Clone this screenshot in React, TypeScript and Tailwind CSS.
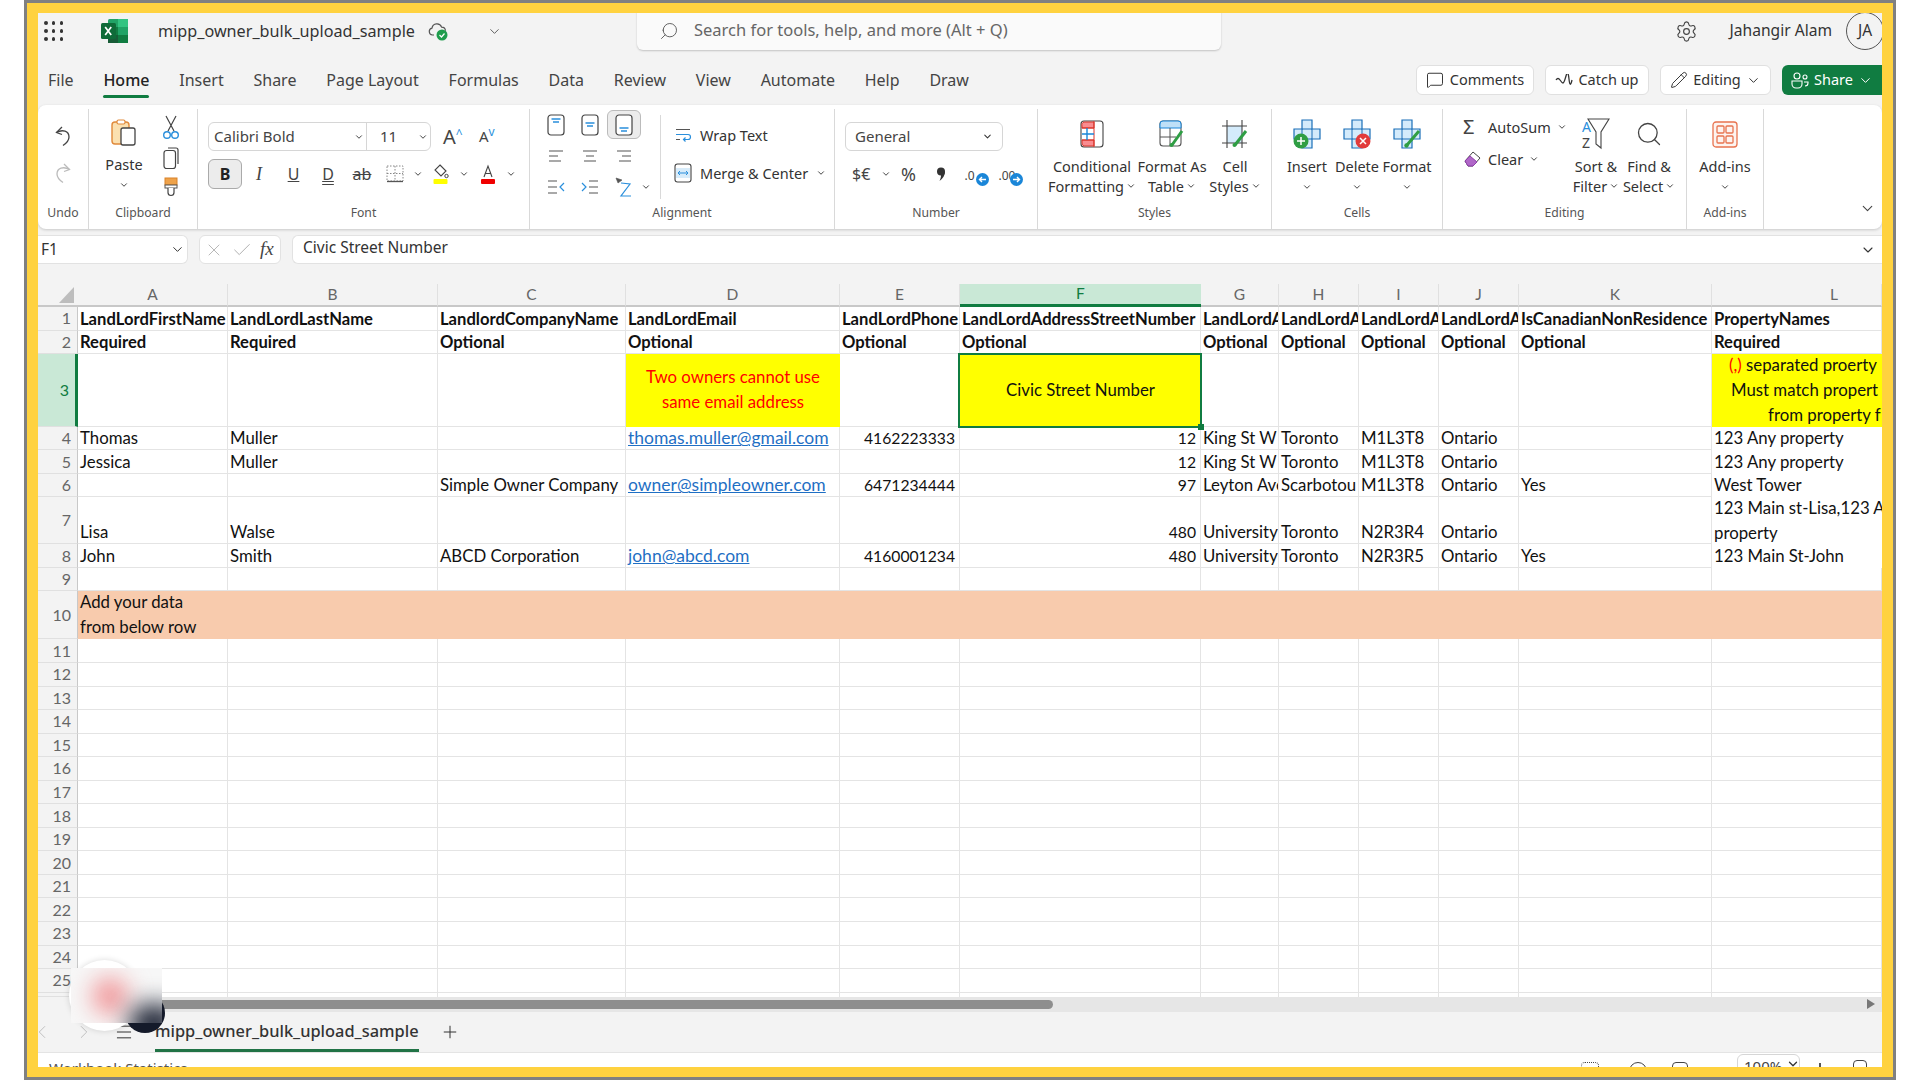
import React from 'react'
import { ChevronDown, ChevronLeft, ChevronRight, MessageSquare, Pencil, Plus, Search, Settings, X, Check, Menu } from 'lucide-react'

const Chev = ({ size = 11, className = '' }: { size?: number; className?: string }) => (
  <ChevronDown size={size} strokeWidth={2.2} className={`text-[#333] shrink-0 ${className}`} />
)

const ExcelLogo = () => (
  <svg width="27" height="24" viewBox="0 0 27 24">
    <rect x="7" y="0" width="20" height="24" rx="1.5" fill="#21a366" />
    <rect x="17" y="0" width="10" height="8" fill="#33c481" />
    <rect x="7" y="8" width="10" height="8" fill="#107c41" />
    <rect x="17" y="16" width="10" height="8" fill="#107c41" />
    <rect x="7" y="16" width="10" height="8" fill="#185c37" />
    <rect x="0" y="4" width="15" height="16" rx="1.5" fill="#0f6b38" />
    <path d="M4.2 8l6 8M10.2 8l-6 8" stroke="#fff" strokeWidth="1.7" />
  </svg>
)

const CloudCheck = () => (
  <svg width="22" height="22" viewBox="0 0 22 22" fill="none">
    <path d="M6 15H4.5a3.5 3.5 0 0 1-.5-6.9 5 5 0 0 1 9.6-1 4 4 0 0 1 3.9 3.7" stroke="#555" strokeWidth="1.2" />
    <circle cx="14" cy="15" r="5.5" fill="#1f9d4d" />
    <path d="M11.5 15l2 2 3-3.5" stroke="#fff" strokeWidth="1.2" />
  </svg>
)

const Waffle = () => (
  <div className="grid grid-cols-3 gap-x-[4.5px] gap-y-[4px] w-[19px]">
    {Array.from({ length: 9 }).map((_, i) => (
      <span key={i} className="w-[3.5px] h-[4px] rounded-full bg-[#333]" />
    ))}
  </div>
)

const UndoIcon = ({ color, flip }: { color: string; flip?: boolean }) => (
  <svg width="18" height="22" viewBox="0 0 18 22" fill="none" stroke={color} strokeWidth="1.3" className={flip ? '-scale-x-100' : ''}>
    <path d="M8 2L2.5 7.5 8 9.5" />
    <path d="M2.5 7.5c6-3.5 12.5-1.5 12.5 4.5 0 3.5-3 6.5-6 8.5" />
  </svg>
)

const ScissorsIcon = () => (
  <svg width="18" height="25" viewBox="0 0 18 25" fill="none" strokeWidth="1.2">
    <path d="M4 1l8 15M14 1L6 16" stroke="#444" />
    <circle cx="5" cy="20" r="3.3" stroke="#2a8fdc" strokeWidth="1.4" />
    <circle cx="13" cy="20" r="3.3" stroke="#2a8fdc" strokeWidth="1.4" />
  </svg>
)

const CopyIcon = () => (
  <svg width="16" height="23" viewBox="0 0 16 23" fill="none" stroke="#444" strokeWidth="1.2">
    <path d="M5 1h8a2 2 0 0 1 2 2v14" />
    <rect x="1" y="3.5" width="11.5" height="18" rx="2.5" fill="#fff" />
  </svg>
)

const PasteIcon = () => (
  <svg width="26" height="27" viewBox="0 0 26 27" fill="none">
    <rect x="1" y="3" width="17" height="22" rx="3" fill="#fbe0b0" stroke="#e0893a" strokeWidth="1.4" />
    <rect x="6" y="1" width="8" height="4" rx="1.5" fill="#fff" stroke="#e0893a" strokeWidth="1.2" />
    <rect x="10" y="9" width="14" height="17" rx="2" fill="#fff" stroke="#444" strokeWidth="1.3" />
  </svg>
)

const BrushIcon = () => (
  <svg width="16" height="20" viewBox="0 0 16 20" fill="none">
    <rect x="2" y="1" width="12" height="7" fill="#eea24a" stroke="#d98229" />
    <rect x="2" y="8" width="12" height="3" fill="#fff" stroke="#555" />
    <path d="M5 11v4.5a3 3 0 0 0 6 0V11" stroke="#444" strokeWidth="1.2" fill="#fff" />
  </svg>
)

const Borders = () => (
  <svg width="18" height="20" viewBox="0 0 18 20" fill="none" stroke="#888">
    <path d="M1 2h16v15H1zM9 2v15M1 9.5h16" strokeDasharray="1.5 1.5" />
    <path d="M1 17.5h16" stroke="#555" strokeDasharray="none" strokeWidth="1.3" />
  </svg>
)

const FillColor = () => (
  <svg width="16" height="22" viewBox="0 0 16 22" fill="none">
    <path d="M7 2l6 6-5 5-6-6z" stroke="#444" strokeWidth="1.1" />
    <circle cx="13.5" cy="13" r="1.7" stroke="#444" />
    <rect x="0.5" y="16" width="14" height="5" rx="1" fill="#ffff00" />
  </svg>
)

const FontColor = () => (
  <svg width="16" height="22" viewBox="0 0 16 22" fill="none">
    <path d="M4 14L8 3l4 11M5.5 10.5h5" stroke="#444" strokeWidth="1.1" />
    <rect x="1" y="16" width="14" height="5" rx="1" fill="#f00000" />
  </svg>
)

const VAlign = ({ y }: { y: number }) => (
  <svg width="18" height="22" viewBox="0 0 18 22" fill="none">
    <rect x="1" y="1" width="16" height="20" rx="3" stroke="#444" strokeWidth="1.2" fill="#fff" />
    <path d={`M4.5 ${y}h9M6 ${y + 3}h6`} stroke="#2a8fdc" strokeWidth="1.3" />
  </svg>
)

const HAlign = ({ d }: { d: string }) => (
  <svg width="16" height="16" viewBox="0 0 16 16" fill="none" stroke="#555" strokeWidth="1.2">
    <path d={d} />
  </svg>
)

const WrapIcon = () => (
  <svg width="18" height="17" viewBox="0 0 18 17" fill="none" strokeWidth="1.2">
    <path d="M2 2.5h14M2 12.5h4" stroke="#555" />
    <path d="M2 7.5h12a2.5 2.5 0 0 1 0 5H9.5M11.5 10.5l-2 2 2 2" stroke="#2a8fdc" />
  </svg>
)

const MergeIcon = () => (
  <svg width="18" height="20" viewBox="0 0 18 20" fill="none">
    <rect x="1" y="1" width="16" height="18" rx="2.5" stroke="#444" strokeWidth="1.1" />
    <rect x="2" y="5" width="14" height="10" fill="#d8ecfa" />
    <path d="M4 10h10M6 8l-2 2 2 2M12 8l2 2-2 2" stroke="#2a8fdc" strokeWidth="1" />
  </svg>
)

const OrientIcon = () => (
  <svg width="18" height="20" viewBox="0 0 18 20" fill="none" strokeWidth="1.2">
    <path d="M1 1l6 2-4 3z" fill="#555" stroke="#555" strokeWidth=".6" />
    <path d="M6 6l9 1-9 12h10" stroke="#2a8fdc" />
  </svg>
)

const IndentIcon = ({ flip }: { flip?: boolean }) => (
  <svg width="18" height="16" viewBox="0 0 18 16" fill="none" strokeWidth="1.2">
    {flip ? (
      <>
        <path d="M1 4l4 4-4 4" stroke="#2a8fdc" />
        <path d="M8 2h9M8 8h9M8 14h9" stroke="#555" />
      </>
    ) : (
      <>
        <path d="M1 2h9M1 8h9M1 14h9" stroke="#555" />
        <path d="M17 4l-4 4 4 4" stroke="#2a8fdc" />
      </>
    )}
  </svg>
)

const CommaIcon = () => (
  <svg width="10" height="15" viewBox="0 0 10 15">
    <circle cx="5" cy="4.5" r="4" fill="#333" />
    <path d="M9 4.5c0 4-2 7-5.5 9.5 1.500-3 1.500-5 1.500-6z" fill="#333" />
  </svg>
)

const Decimals = ({ label, arrow }: { label: string; arrow: string }) => (
  <div className="relative w-[24px] h-[24px]">
    <span className="text-[12px] leading-none text-[#444]">{label}</span>
    <svg width="13" height="13" viewBox="0 0 13 13" className="absolute right-0 bottom-0">
      <circle cx="6.5" cy="6.5" r="6.5" fill="#1a86d8" />
      <path d={arrow} stroke="#fff" strokeWidth="1.4" fill="none" />
    </svg>
  </div>
)

const CondFormat = () => (
  <svg width="24" height="28" viewBox="0 0 24 28" fill="none">
    <rect x="1" y="1" width="22" height="26" rx="3" fill="#fff" stroke="#444" strokeWidth="1.1" />
    <path d="M2 6a3 3 0 0 1 2-4h10v6H2zM2 20h12v6H4a3 3 0 0 1-2-3z" fill="#f98c90" stroke="#d9342b" />
    <path d="M2 8h12M2 20h12M14 1v26" stroke="#d9342b" />
    <path d="M2 14h12M7 8v12" stroke="#1a86d8" strokeWidth="1.4" />
  </svg>
)

const FormatTable = () => (
  <svg width="26" height="28" viewBox="0 0 26 28" fill="none">
    <rect x="1" y="1" width="21" height="25" rx="3" stroke="#555" strokeWidth="1.1" />
    <path d="M1 4a3 3 0 0 1 3-3h15a3 3 0 0 1 3 3v4H1z" fill="#bfe0f7" stroke="#1a86d8" />
    <path d="M1 17h16M11 8v18" stroke="#555" />
    <path d="M13 25L23 11" stroke="#2f9e44" strokeWidth="3" />
    <circle cx="12.5" cy="25" r="2" fill="#2f9e44" />
  </svg>
)

const CellStyles = () => (
  <svg width="26" height="30" viewBox="0 0 26 30" fill="none">
    <rect x="5" y="7" width="15" height="17" fill="#d4ebfb" />
    <path d="M5 1v28M20 1v28M0 7h25M0 24h25" stroke="#444" strokeWidth="1.1" />
    <path d="M13 26L24 12" stroke="#2f9e44" strokeWidth="3" />
    <circle cx="12.5" cy="26" r="2" fill="#2f9e44" />
  </svg>
)

const CellCross = ({ badge }: { badge: 'add' | 'del' | 'fmt' }) => (
  <svg width="28" height="30" viewBox="0 0 28 30" fill="none">
    <path d="M9 1h10v9h8v10h-8v9H9v-9H1V10h8z" fill="#d4ebfb" stroke="#1a6fb8" strokeWidth="1.2" />
    <path d="M9 10h10v10H9z" stroke="#1a6fb8" />
    {badge === 'add' && (
      <>
        <circle cx="8" cy="22" r="7.5" fill="#2f9e44" />
        <path d="M8 18v8M4 22h8" stroke="#fff" strokeWidth="1.5" />
      </>
    )}
    {badge === 'del' && (
      <>
        <circle cx="20" cy="22" r="7.5" fill="#e23b3b" />
        <path d="M17 19l6 6M23 19l-6 6" stroke="#fff" strokeWidth="1.5" />
      </>
    )}
    {badge === 'fmt' && (
      <>
        <path d="M14 26L26 12" stroke="#2f9e44" strokeWidth="3" />
        <circle cx="13.5" cy="26.5" r="2.2" fill="#2f9e44" />
      </>
    )}
  </svg>
)

const SortIcon = () => (
  <svg width="28" height="32" viewBox="0 0 28 32" fill="none">
    <path d="M6 1h21l-8 13v16l-5-4V14z" fill="#fff" stroke="#444" strokeWidth="1.1" />
    <text x="0" y="14" fontSize="14" fill="#2a8fdc" fontFamily="'Noto Sans',sans-serif">A</text>
    <text x="0" y="30" fontSize="14" fill="#444" fontFamily="'Noto Sans',sans-serif">Z</text>
  </svg>
)

const AddinsIcon = () => (
  <svg width="26" height="27" viewBox="0 0 26 27" fill="none" stroke="#e8734f" strokeWidth="1.3">
    <rect x="1" y="1" width="24" height="25" rx="3" fill="#fdf4f0" />
    <rect x="5" y="5" width="7" height="7" rx="1" />
    <rect x="14" y="5" width="7" height="7" rx="1" />
    <rect x="5" y="15" width="7" height="7" rx="1" />
    <rect x="14" y="15" width="7" height="7" rx="1" />
  </svg>
)

const Group = ({ label, w, children }: { label: string; w: string; children: React.ReactNode }) => (
  <section className={`flex flex-col shrink-0 ${w} border-r border-[#d9d9d9]`}>
    <div className="h-[94px] flex">{children}</div>
    <div className="h-[19px] text-center text-[12.2px] leading-[19px] text-[#555]">{label}</div>
  </section>
)

const BigItem = ({ icon, lines, w }: { icon: React.ReactNode; lines: string[]; w: string }) => (
  <div className={`flex flex-col items-center shrink-0 ${w}`}>
    <div className="h-[38px] mt-[6px] flex items-center justify-center">{icon}</div>
    <div className="mt-[3px] text-[14.5px] leading-[20px] text-[#333] text-center whitespace-nowrap">
      {lines[0]}
      <br />
      <span className="inline-flex items-center gap-[2px] h-[20px]">
        {lines[1]}
        <Chev size={10} />
      </span>
    </div>
  </div>
)

const Ribbon = () => (
  <div className="h-[124px] bg-white rounded-lg shadow-[0_1px_3px_rgba(0,0,0,0.18)] flex pt-[4px] text-[#333]">
    <Group label="Undo" w="w-[51px]">
      <div className="w-full flex flex-col items-center pt-[16px] gap-[15px]">
        <UndoIcon color="#444" />
        <UndoIcon color="#bbb" flip />
      </div>
    </Group>
    <Group label="Clipboard" w="w-[109px]">
      <div className="w-[70px] flex flex-col items-center pt-[10px]">
        <PasteIcon />
        <span className="text-[14.5px] leading-[20px] mt-[8px]">Paste</span>
        <Chev size={10} className="mt-[6px]" />
      </div>
      <div className="w-[24px] flex flex-col items-center pt-[6px] gap-[7px]">
        <ScissorsIcon />
        <CopyIcon />
        <BrushIcon />
      </div>
    </Group>
    <Group label="Font" w="w-[332px]">
      <div className="pl-[10px] pt-[13px] flex flex-col gap-[8px]">
        <div className="flex items-center h-[29px]">
          <div className="w-[223px] h-full flex items-center border border-[#d6d6d6] rounded-md text-[15px] text-[#444]">
            <span className="w-[145px] pl-[5px]">Calibri Bold</span>
            <Chev size={10} />
            <span className="ml-[2px] h-full border-l border-[#d6d6d6] w-[64px] pl-[13px] flex items-center justify-between pr-[2px]">
              11
              <Chev size={10} />
            </span>
          </div>
          <span className="ml-[12px] w-[26px] text-[20px] leading-none text-[#444]">A<sup className="text-[#2a8fdc] text-[12px]">^</sup></span>
          <span className="ml-[10px] w-[26px] text-[15px] leading-none text-[#444]">A<sup className="text-[#2a8fdc] text-[12px]">v</sup></span>
        </div>
        <div className="flex items-center h-[30px] text-[16px] text-[#444]">
          <span className="w-[34px] h-full flex items-center justify-center bg-[#ececec] border border-[#aaa] rounded-md font-bold text-[#222]">B</span>
          <span className="w-[34px] text-center italic font-['Liberation_Serif',serif] text-[18px]">I</span>
          <span className="w-[35px] text-center underline">U</span>
          <span className="w-[34px] text-center underline decoration-double">D</span>
          <span className="w-[34px] text-center line-through">ab</span>
          <span className="w-[31px] flex justify-center"><Borders /></span>
          <span className="w-[16px] flex justify-center"><Chev size={10} /></span>
          <span className="w-[30px] flex justify-center"><FillColor /></span>
          <span className="w-[16px] flex justify-center"><Chev size={10} /></span>
          <span className="w-[32px] flex justify-center"><FontColor /></span>
          <span className="w-[14px] flex justify-center"><Chev size={10} /></span>
        </div>
      </div>
    </Group>
    <Group label="Alignment" w="w-[305px]">
      <div className="w-[130px] pl-[9px] pt-[1px] flex flex-col">
        <div className="h-[30px] flex items-center">
          <span className="w-[34px] flex justify-center"><VAlign y={5} /></span>
          <span className="w-[34px] flex justify-center"><VAlign y={9} /></span>
          <span className="w-[34px] h-[29px] flex justify-center items-center bg-[#ececec] border border-[#bbb] rounded-md"><VAlign y={14} /></span>
        </div>
        <div className="h-[32px] flex items-center">
          <span className="w-[34px] flex justify-center"><HAlign d="M1 3h14M1 8h9M1 13h12" /></span>
          <span className="w-[34px] flex justify-center"><HAlign d="M1 3h14M4 8h8M2 13h12" /></span>
          <span className="w-[34px] flex justify-center"><HAlign d="M1 3h14M6 8h9M3 13h12" /></span>
        </div>
        <div className="h-[32px] flex items-center">
          <span className="w-[34px] flex justify-center"><IndentIcon /></span>
          <span className="w-[34px] flex justify-center"><IndentIcon flip /></span>
          <span className="w-[34px] flex justify-center"><OrientIcon /></span>
          <Chev size={10} />
        </div>
      </div>
      <div className="mt-[6px] h-[84px] border-l border-[#d9d9d9] pl-[13px] flex flex-col gap-[17px] pt-[10px] text-[14.5px] leading-[20px]">
        <div className="flex items-center gap-[8px]"><WrapIcon />Wrap Text</div>
        <div className="flex items-center gap-[8px] mt-[1px]"><MergeIcon />Merge & Center<Chev size={10} /></div>
      </div>
    </Group>
    <Group label="Number" w="w-[203px]">
      <div className="pl-[10px] pt-[13px] flex flex-col gap-[9px]">
        <div className="w-[158px] h-[29px] flex items-center justify-between px-[9px] border border-[#d6d6d6] rounded-md text-[15px] text-[#444]">
          General
          <Chev size={11} />
        </div>
        <div className="flex items-center h-[28px] text-[16px] text-[#444]">
          <span className="w-[32px] pl-[7px]">$€</span>
          <span className="w-[18px] flex justify-center"><Chev size={10} /></span>
          <span className="w-[27px] text-center text-[18px]">%</span>
          <span className="w-[38px] flex justify-center"><CommaIcon /></span>
          <span className="w-[33px] flex justify-center"><Decimals label=".0" arrow="M10 6.5H3.5M6 4L3.5 6.5 6 9" /></span>
          <span className="w-[35px] flex justify-center"><Decimals label=".00" arrow="M3 6.5h6.5M7 4l2.5 2.5L7 9" /></span>
        </div>
      </div>
    </Group>
    <Group label="Styles" w="w-[234px]">
      <div className="flex pl-[12px]">
        <BigItem icon={<CondFormat />} lines={['Conditional', 'Formatting']} w="w-[84px]" />
        <BigItem icon={<FormatTable />} lines={['Format As', 'Table']} w="w-[76px]" />
        <BigItem icon={<CellStyles />} lines={['Cell', 'Styles']} w="w-[50px]" />
      </div>
    </Group>
    <Group label="Cells" w="w-[171px]">
      <div className="flex pl-[10px]">
        <BigItem icon={<CellCross badge="add" />} lines={['Insert', '']} w="w-[50px]" />
        <BigItem icon={<CellCross badge="del" />} lines={['Delete', '']} w="w-[50px]" />
        <BigItem icon={<CellCross badge="fmt" />} lines={['Format', '']} w="w-[50px]" />
      </div>
    </Group>
    <Group label="Editing" w="w-[244px]">
      <div className="w-[126px] pl-[20px] pt-[8px] flex flex-col gap-[12px] text-[14.5px] leading-[20px]">
        <div className="flex items-center">
          <span className="w-[25px] text-[20px] leading-none text-[#444]">Σ</span>
          AutoSum
          <Chev size={10} className="ml-[6px]" />
        </div>
        <div className="flex items-center">
          <svg width="22" height="20" viewBox="0 0 22 20" fill="none" className="mr-[3px]">
            <path d="M2 12l8-9 7 6-7 8H5z" fill="#fff" stroke="#444" />
            <path d="M2 12l5-5 7 6-4 4H5z" fill="#b067c8" stroke="#8d3fa8" />
          </svg>
          Clear
          <Chev size={10} className="ml-[6px]" />
        </div>
      </div>
      <BigItem icon={<SortIcon />} lines={['Sort &', 'Filter']} w="w-[54px]" />
      <BigItem icon={<Search size={28} strokeWidth={1.1} className="text-[#444]" />} lines={['Find &', 'Select']} w="w-[52px]" />
    </Group>
    <Group label="Add-ins" w="w-[77px]">
      <BigItem icon={<AddinsIcon />} lines={['Add-ins', '']} w="w-full" />
    </Group>
    <div className="flex-1 h-[113px] flex justify-end items-end pb-[5px] pr-[6px]">
      <ChevronDown size={17} strokeWidth={1.6} className="text-[#444]" />
    </div>
  </div>
)

const TitleBar = () => (
  <div className="h-[38px] flex items-center relative pb-[2px]">
    <div className="ml-[6px] w-[57px]"><Waffle /></div>
    <ExcelLogo />
    <span className="ml-[30px] text-[16.2px] text-[#333]">mipp_owner_bulk_upload_sample</span>
    <span className="ml-[13px]"><CloudCheck /></span>
    <ChevronDown size={15} strokeWidth={1.5} className="ml-[37px] text-[#555]" />
    <div className="absolute left-[599px] top-[-4px] w-[584px] h-[41px] bg-[#fafafa] rounded-b-md shadow-[0_1px_2px_rgba(0,0,0,0.2)] flex items-center pl-[22px] pt-[2px] text-[16.5px] text-[#666] gap-[15px]">
      <Search size={20} strokeWidth={1.1} className="-scale-x-100 text-[#555]" />
      Search for tools, help, and more (Alt + Q)
    </div>
    <Settings size={23} strokeWidth={1.2} className="ml-auto mr-[32px] text-[#444]" />
    <span className="text-[15.6px] text-[#333] mr-[14px]">Jahangir Alam</span>
    <span className="w-[38px] h-[38px] mr-[-2px] rounded-full border border-[#555] flex items-center justify-center text-[15.5px] text-[#333] shrink-0">JA</span>
  </div>
)

const tabs = ['File', 'Home', 'Insert', 'Share', 'Page Layout', 'Formulas', 'Data', 'Review', 'View', 'Automate', 'Help', 'Draw']

const TabRow = () => (
  <div className="h-[54px] flex items-center pt-[4px] pl-[10px]">
    <div className="flex gap-[29.8px] text-[16px] text-[#444]">
      {tabs.map(t => (
        <span key={t} className={t === 'Home' ? 'relative font-medium text-[#222]' : ''}>
          {t}
          {t === 'Home' && <span className="absolute left-0 right-0 top-[27px] h-[3px] bg-[#107c41] rounded" />}
        </span>
      ))}
    </div>
    <div className="ml-auto flex items-center gap-[11px] text-[14.5px] text-[#333]">
      <div className="w-[118px] h-[30px] bg-white border border-[#e0e0e0] rounded-md flex items-center justify-center gap-[6px]">
        <MessageSquare size={18} strokeWidth={1.3} />Comments
      </div>
      <div className="w-[104px] h-[30px] bg-white border border-[#e0e0e0] rounded-md flex items-center justify-center gap-[5px]">
        <svg width="18" height="12" viewBox="0 0 18 12" fill="none" stroke="#333" strokeWidth="1.3"><path d="M1 6q2-3 4 0t3 3 3-7 3 3 3 1" /></svg>
        Catch up
      </div>
      <div className="w-[111px] h-[30px] bg-white border border-[#e0e0e0] rounded-md flex items-center justify-center gap-[5px]">
        <Pencil size={18} strokeWidth={1.3} />Editing<ChevronDown size={15} strokeWidth={1.6} />
      </div>
      <div className="w-[100px] h-[30px] bg-[#107c41] rounded-l-md flex items-center justify-center gap-[5px] text-white">
        <svg width="18" height="18" viewBox="0 0 18 18" fill="none" stroke="#fff" strokeWidth="1.1">
          <circle cx="6" cy="5" r="3" /><circle cx="14" cy="6" r="2" />
          <path d="M1 10h10v3a4 4 0 0 1-4 4H5a4 4 0 0 1-4-4zM13 11h4v1a3 3 0 0 1-3 3" />
        </svg>
        Share<ChevronDown size={15} strokeWidth={1.6} />
      </div>
    </div>
  </div>
)

const FormulaBar = () => (
  <div className="mt-[6px] h-[29px] flex text-[#333]">
    <div className="w-[150px] bg-white border border-l-0 border-[#e2e2e2] rounded-r-md flex items-center justify-between pl-[3px] pr-[2px] text-[15.5px]">
      F1
      <ChevronDown size={15} strokeWidth={1.6} />
    </div>
    <div className="ml-[11px] w-[82px] bg-white border border-[#e2e2e2] rounded-md flex items-center pl-[4px] gap-[7px]">
      <X size={20} strokeWidth={1} className="text-[#aaa]" />
      <Check size={22} strokeWidth={1} className="text-[#aaa]" />
      <span className="italic text-[19px] font-['Liberation_Serif',serif] text-[#444]">fx</span>
    </div>
    <div className="ml-[11px] flex-1 bg-white border border-r-0 border-[#e2e2e2] rounded-l-md flex items-center justify-between pl-[10px] pr-[6px] text-[15.5px] leading-none pb-[3px]">
      Civic Street Number
      <ChevronDown size={16} strokeWidth={1.6} className="mt-[3px]" />
    </div>
  </div>
)

const columns = ['A', 'B', 'C', 'D', 'E', 'F', 'G', 'H', 'I', 'J', 'K', 'L']

type Data = Record<string, string>
const rowsData: Record<number, Data> = {
  1: { A: 'LandLordFirstName', B: 'LandLordLastName', C: 'LandlordCompanyName', D: 'LandLordEmail', E: 'LandLordPhone', F: 'LandLordAddressStreetNumber', G: 'LandLordA', H: 'LandLordA', I: 'LandLordA', J: 'LandLordA', K: 'IsCanadianNonResidence', L: 'PropertyNames' },
  2: { A: 'Required', B: 'Required', C: 'Optional', D: 'Optional', E: 'Optional', F: 'Optional', G: 'Optional', H: 'Optional', I: 'Optional', J: 'Optional', K: 'Optional', L: 'Required' },
  4: { A: 'Thomas', B: 'Muller', D: 'thomas.muller@gmail.com', E: '4162223333', F: '12', G: 'King St W', H: 'Toronto', I: 'M1L3T8', J: 'Ontario', L: '123 Any property' },
  5: { A: 'Jessica', B: 'Muller', F: '12', G: 'King St W', H: 'Toronto', I: 'M1L3T8', J: 'Ontario', L: '123 Any property' },
  6: { C: 'Simple Owner Company', D: 'owner@simpleowner.com', E: '6471234444', F: '97', G: 'Leyton Ave', H: 'Scarbotou', I: 'M1L3T8', J: 'Ontario', K: 'Yes', L: 'West Tower' },
  7: { A: 'Lisa', B: 'Walse', F: '480', G: 'University', H: 'Toronto', I: 'N2R3R4', J: 'Ontario' },
  8: { A: 'John', B: 'Smith', C: 'ABCD Corporation', D: 'john@abcd.com', E: '4160001234', F: '480', G: 'University', H: 'Toronto', I: 'N2R3R5', J: 'Ontario', K: 'Yes', L: '123 Main St-John' },
}

const Cell = ({ r, c }: { r: number; c: string }) => {
  const value = rowsData[r]?.[c]
  if (r === 3 && c === 'D') {
    return (
      <div className="bg-[#ffff00] flex items-center justify-center text-center text-[#ff0000] leading-[25px] pb-[2px]">
        Two owners cannot use
        <br />
        same email address
      </div>
    )
  }
  if (r === 3 && c === 'F') {
    return (
      <div className="relative bg-[#ffff00] flex items-center justify-center pb-[2px]">
        Civic Street Number
        <div className="absolute left-[-2px] right-[-1px] top-[-1px] bottom-[-1px] border-[2.5px] border-[#107c41]" />
        <div className="absolute right-[-3px] bottom-[-3px] w-[6px] h-[6px] bg-[#107c41]" />
      </div>
    )
  }
  if (r === 3 && c === 'L') {
    return (
      <div className="bg-[#ffff00] overflow-hidden whitespace-nowrap leading-[25px]">
        <div className="pl-[17px] -mt-[2px]"><span className="text-[#ff0000]">(,)</span> separated proerty</div>
        <div className="pl-[19px]">Must match propert</div>
        <div className="pl-[56px]">from property f</div>
      </div>
    )
  }
  if (r === 7 && c === 'L') {
    return (
      <div className="overflow-hidden whitespace-nowrap pl-[2px] leading-[25px]">
        <div className="-mt-[2px]">123 Main st-Lisa,123 A</div>
        <div>property</div>
      </div>
    )
  }
  const numeric = value !== undefined && /^\d+$/.test(value)
  const link = value !== undefined && value.includes('@')
  const noLine = c === 'L' && r >= 4 && r <= 8
  const line = r === 26 ? 'border-r border-[#e4e4e4]' : noLine ? 'border-b border-transparent' : 'border-r border-b border-[#e4e4e4]'
  const size = r < 3 ? 'font-bold text-[16.6px]' : numeric ? 'text-[15.7px]' : link ? 'text-[17.5px]' : ''
  return (
    <div className={`flex items-end overflow-hidden whitespace-nowrap leading-[22px] pl-[2px] pr-[3px] ${line} ${numeric ? 'justify-end pr-[4px]' : ''} ${size}`}>
      {value && (link ? <span className="text-[#1f6fc4] underline">{value}</span> : value)}
    </div>
  )
}

const RowHeader = ({ r }: { r: number }) => (
  <div
    className={`flex items-center justify-end pr-[6px] border-b text-[16px] ${
      r === 3 ? 'bg-[#c9e8d6] text-[#107c41] border-[#e0e0e0] border-r-[3px] border-r-[#107c41]' : 'bg-[#f3f3f3] text-[#666] border-[#e0e0e0] border-r border-r-[#c8c8c8]'
    }`}
  >
    {r <= 25 ? r : ''}
  </div>
)

const Sheet = () => {
  const nums = Array.from({ length: 26 }, (_, i) => i + 1)
  return (
    <div className="mt-[20px] grid grid-cols-[40px_150px_210px_188px_214px_120px_241px_78px_80px_80px_80px_193px_170px] grid-rows-[23px_repeat(2,23.56px)_72.6px_repeat(3,23.56px)_47px_repeat(2,23.56px)_48px_repeat(15,23.56px)_4px] bg-white font-['Lato',sans-serif] text-[16.8px] text-[#111]">
      <div className="bg-[#f3f3f3] border-b-2 border-[#c8c8c8] flex items-end justify-end pr-[4px] pb-[2px]">
        <div className="w-0 h-0 border-l-[15px] border-l-transparent border-b-[16px] border-b-[#bdbdbd]" />
      </div>
      {columns.map(c => (
        <div
          key={c}
          className={`flex items-center text-[15.5px] ${c === 'L' ? 'pl-[118px]' : 'justify-center'} ${
            c === 'F' ? 'bg-[#c9e8d6] text-[#107c41] border-b-[3px] border-[#107c41]' : 'bg-[#f3f3f3] text-[#666] border-b-2 border-[#c8c8c8] border-r border-r-[#e0e0e0]'
          }`}
        >
          {c}
        </div>
      ))}
      {nums.map(r => (
        <React.Fragment key={r}>
          <RowHeader r={r} />
          {r === 10 ? (
            <div className="col-span-12 bg-[#f8cbad] leading-[25px] pl-[2px] pb-[2px] flex flex-col justify-center">
              <div>Add your data</div>
              <div>from below row</div>
            </div>
          ) : (
            columns.map(c => <Cell key={c} r={r} c={c} />)
          )}
        </React.Fragment>
      ))}
    </div>
  )
}

const SheetTabs = () => (
  <>
    <div className="h-[15px] ml-[40px] bg-[#e6e6e6] py-[3px] pr-[7px] flex items-center justify-between">
      <div className="w-[975px] h-[9px] bg-[#8e8e8e] rounded-full" />
      <div className="w-0 h-0 border-l-[8px] border-l-[#777] border-y-[5px] border-y-transparent" />
    </div>
    <div className="h-[40px] flex items-stretch text-[#333]">
      <div className="w-[117px] flex items-center">
        <ChevronLeft size={22} strokeWidth={1} className="ml-[-7px] text-[#bbb]" />
        <ChevronRight size={22} strokeWidth={1} className="ml-[20px] text-[#bbb]" />
        <Menu size={20} strokeWidth={1.2} className="ml-[19px] text-[#333]" />
      </div>
      <div className="relative flex items-center text-[16.4px] pb-[1px] font-medium">
        mipp_owner_bulk_upload_sample
        <span className="absolute left-0 right-0 bottom-0 h-[3px] bg-[#217346]" />
      </div>
      <Plus size={20} strokeWidth={1.2} className="ml-[21px] self-center" />
    </div>
    <div className="h-[15px] bg-white border-t border-[#e4e4e4] flex items-start overflow-hidden text-[15px] text-[#555] leading-[18px] pt-[6px]">
      <span className="ml-[11px]">Workbook Statistics</span>
      <div className="ml-auto flex items-start mr-[15px] mt-[3px] text-[#444]">
        <span className="w-[18px] h-[14px] border border-[#444] rounded-sm border-dotted" />
        <span className="ml-[30px] w-[18px] h-[18px] border border-[#444] rounded-full" />
        <span className="ml-[25px] w-[16px] h-[12px] border border-[#444] rounded-sm" />
        <span className="ml-[22px] w-[14px] h-[1px] mt-[5px] bg-[#888]" />
        <div className="ml-[13px] w-[63px] h-[22px] -mt-[8px] bg-white border border-[#d6d6d6] rounded-md flex items-start pl-[6px] pt-[2px] gap-[4px]">100%<Chev size={14} /></div>
        <span className="ml-[19px] w-[2px] h-[10px] bg-[#555] mt-[1px]" />
        <span className="ml-[32px] w-[14px] h-[14px] border border-[#444] rounded-sm mt-[-2px]" />
      </div>
    </div>
  </>
)

export default function App() {
  return (
    <div className="relative w-[1920px] h-[1080px] bg-white overflow-hidden font-['Noto_Sans',sans-serif]">
      <div className="ml-[24px] w-[1872px] h-[1080px] border-[3px] border-[#808080]">
        <div className="h-full border-x-[11px] border-y-[10px] border-[#ffd23f] bg-[#f3f3f3] overflow-hidden">
          <TitleBar />
          <TabRow />
          <Ribbon />
          <FormulaBar />
          <Sheet />
          <SheetTabs />
        </div>
      </div>

      {/* recording widget blurred out over the bottom-left corner */}
      <div className="absolute left-[69px] top-[960px] w-[71px] h-[71px] rounded-full bg-white shadow-[0_0_6px_rgba(0,0,0,0.15)]" />
      <div className="absolute left-[125px] top-[993px] w-[40px] h-[40px] rounded-full bg-[#141a2a]" />
      <div className="absolute left-[71px] top-[968px] w-[91px] h-[55px] overflow-hidden bg-[#f7f7f7]">
        <div className="absolute left-[22px] top-[10px] w-[34px] h-[36px] rounded-full bg-[#f08f92] blur-md" />
        <div className="absolute left-[58px] top-[36px] w-[50px] h-[40px] rounded-full bg-[#1c2233] blur-md" />
      </div>
    </div>
  )
}
